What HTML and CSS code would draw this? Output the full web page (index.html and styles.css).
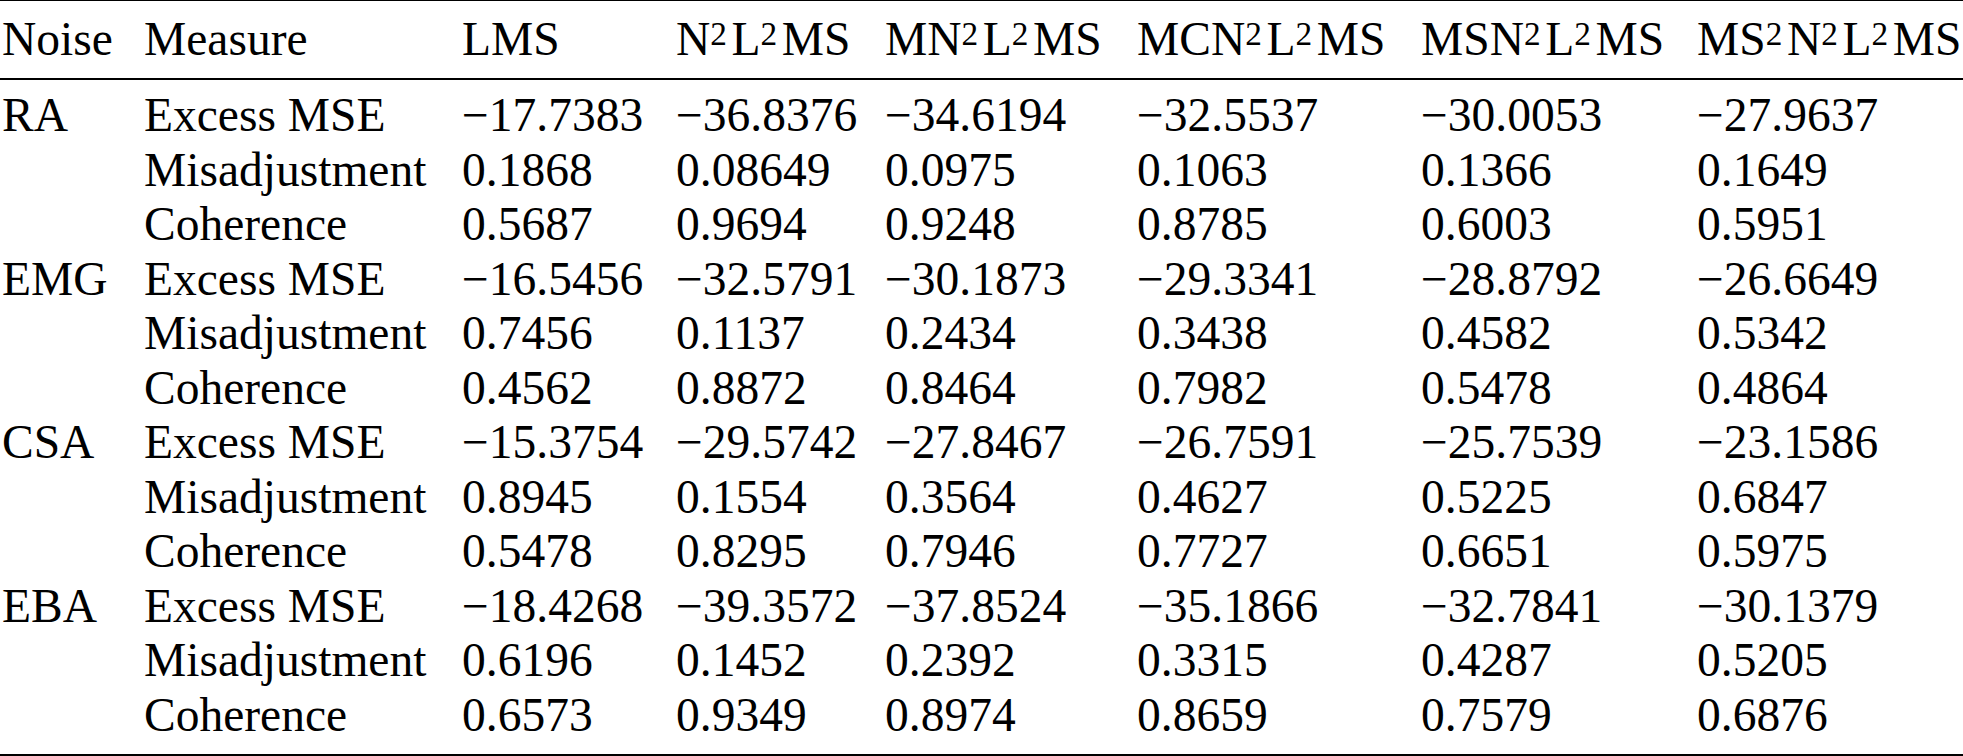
FILE: index.html
```html
<!DOCTYPE html>
<html lang="en">
<head>
  <meta charset="utf-8">
  <title>Noise measures</title>
  <link rel="stylesheet" href="styles.css">
</head>
<body>
  <table class="results">
    <thead>
      <tr>
        <th class="col-noise">Noise</th>
        <th class="col-measure">Measure</th>
        <th class="col-lms">LMS</th>
        <th class="col-n2">N<sup>2</sup>L<sup>2</sup>MS</th>
        <th class="col-mn2">MN<sup>2</sup>L<sup>2</sup>MS</th>
        <th class="col-mcn2">MCN<sup>2</sup>L<sup>2</sup>MS</th>
        <th class="col-msn2">MSN<sup>2</sup>L<sup>2</sup>MS</th>
        <th class="col-ms2">MS<sup>2</sup>N<sup>2</sup>L<sup>2</sup>MS</th>
      </tr>
    </thead>
    <tbody>
      <tr class="first">
        <td>RA</td><td>Excess MSE</td>
        <td>&minus;17.7383</td><td>&minus;36.8376</td><td>&minus;34.6194</td><td>&minus;32.5537</td><td>&minus;30.0053</td><td>&minus;27.9637</td>
      </tr>
      <tr>
        <td></td><td>Misadjustment</td>
        <td>0.1868</td><td>0.08649</td><td>0.0975</td><td>0.1063</td><td>0.1366</td><td>0.1649</td>
      </tr>
      <tr>
        <td></td><td>Coherence</td>
        <td>0.5687</td><td>0.9694</td><td>0.9248</td><td>0.8785</td><td>0.6003</td><td>0.5951</td>
      </tr>
      <tr>
        <td>EMG</td><td>Excess MSE</td>
        <td>&minus;16.5456</td><td>&minus;32.5791</td><td>&minus;30.1873</td><td>&minus;29.3341</td><td>&minus;28.8792</td><td>&minus;26.6649</td>
      </tr>
      <tr>
        <td></td><td>Misadjustment</td>
        <td>0.7456</td><td>0.1137</td><td>0.2434</td><td>0.3438</td><td>0.4582</td><td>0.5342</td>
      </tr>
      <tr>
        <td></td><td>Coherence</td>
        <td>0.4562</td><td>0.8872</td><td>0.8464</td><td>0.7982</td><td>0.5478</td><td>0.4864</td>
      </tr>
      <tr>
        <td>CSA</td><td>Excess MSE</td>
        <td>&minus;15.3754</td><td>&minus;29.5742</td><td>&minus;27.8467</td><td>&minus;26.7591</td><td>&minus;25.7539</td><td>&minus;23.1586</td>
      </tr>
      <tr>
        <td></td><td>Misadjustment</td>
        <td>0.8945</td><td>0.1554</td><td>0.3564</td><td>0.4627</td><td>0.5225</td><td>0.6847</td>
      </tr>
      <tr>
        <td></td><td>Coherence</td>
        <td>0.5478</td><td>0.8295</td><td>0.7946</td><td>0.7727</td><td>0.6651</td><td>0.5975</td>
      </tr>
      <tr>
        <td>EBA</td><td>Excess MSE</td>
        <td>&minus;18.4268</td><td>&minus;39.3572</td><td>&minus;37.8524</td><td>&minus;35.1866</td><td>&minus;32.7841</td><td>&minus;30.1379</td>
      </tr>
      <tr>
        <td></td><td>Misadjustment</td>
        <td>0.6196</td><td>0.1452</td><td>0.2392</td><td>0.3315</td><td>0.4287</td><td>0.5205</td>
      </tr>
      <tr class="last">
        <td></td><td>Coherence</td>
        <td>0.6573</td><td>0.9349</td><td>0.8974</td><td>0.8659</td><td>0.7579</td><td>0.6876</td>
      </tr>
    </tbody>
  </table>
</body>
</html>
```

FILE: styles.css
```css
body {
  margin: 0;
  background: #fff;
  color: #000;
  font-family: "Liberation Serif", "Times New Roman", serif;
}
.results {
  width: 1963px;
  table-layout: fixed;
  border-collapse: collapse;
  border-top: 1px solid #000;
  border-bottom: 2px solid #000;
  font-size: 47.5px;
}
.results th,
.results td {
  padding: 0;
  text-align: left;
  font-weight: normal;
  white-space: nowrap;
}
.results thead tr {
  border-bottom: 2px solid #000;
}
.results th {
  height: 77px;
  line-height: 77px;
}
.results td {
  height: 54.5px;
  line-height: 54.5px;
}
.results tr.first td {
  padding-top: 8px;
}
.results tr.last td {
  padding-bottom: 12px;
}
.results th:first-child,
.results td:first-child {
  padding-left: 2px;
}
.col-noise { width: 142px; }
.col-measure { width: 318px; }
.col-lms { width: 214px; }
.col-n2 { width: 209px; }
.col-mn2 { width: 252px; }
.col-mcn2 { width: 284px; }
.col-msn2 { width: 276px; }
.col-ms2 { width: 266px; }
sup {
  font-size: 0.7em;
  line-height: 0;
  vertical-align: 0.3em;
  margin-right: 0.14em;
}
```
